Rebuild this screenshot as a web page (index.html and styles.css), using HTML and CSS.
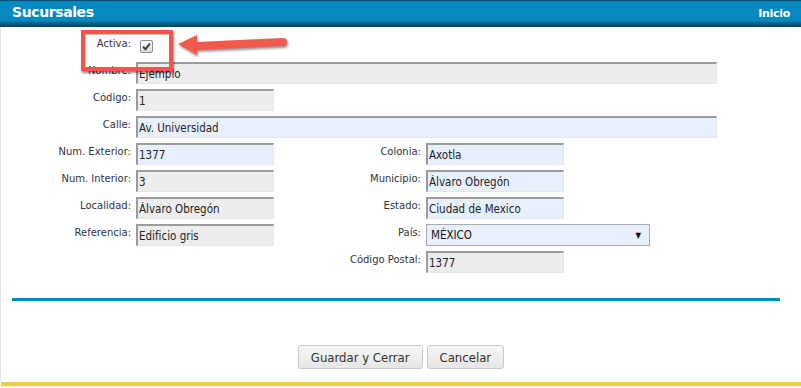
FILE: index.html
```html
<!DOCTYPE html>
<html lang="es">
<head>
  <meta charset="UTF-8">
  <meta name="viewport" content="width=device-width, initial-scale=1.0">
  <link rel="stylesheet" href="styles.css">
</head>
<body>

<div class="header">
  <span class="header-title">Sucursales</span>
  <a class="header-link" href="#">Inicio</a>
</div>

<div class="content">
  <form class="form-grid">
    <label class="lbl">Activa:</label>
    <span class="check"><svg width="9" height="9" viewBox="0 0 9 9"><path d="M1 4.8 L3.5 7.2 L8 1.5" fill="none" stroke="#3c3c3c" stroke-width="2"/></svg></span>

    <label class="lbl">Nombre:</label>
    <input class="field wide gray" value="Ejemplo" readonly>

    <label class="lbl">Código:</label>
    <input class="field gray" value="1" readonly>

    <label class="lbl">Calle:</label>
    <input class="field wide blue" value="Av. Universidad">

    <label class="lbl">Num. Exterior:</label>
    <input class="field blue" value="1377">
    <label class="lbl right">Colonia:</label>
    <input class="field blue" value="Axotla">

    <label class="lbl">Num. Interior:</label>
    <input class="field gray" value="3">
    <label class="lbl right">Municipio:</label>
    <input class="field blue" value="Álvaro Obregón">

    <label class="lbl">Localidad:</label>
    <input class="field gray" value="Álvaro Obregón">
    <label class="lbl right">Estado:</label>
    <input class="field blue" value="Ciudad de Mexico">

    <label class="lbl">Referencia:</label>
    <input class="field gray" value="Edificio gris">
    <label class="lbl right">País:</label>
    <div class="select">
      <span>MÉXICO</span>
      <span class="select-arrow">▼</span>
    </div>

    <label class="lbl right">Código Postal:</label>
    <input class="field gray" value="1377" readonly>
  </form>

  <div class="divider"></div>

  <div class="actions">
    <button type="button" class="btn">Guardar y Cerrar</button>
    <button type="button" class="btn">Cancelar</button>
  </div>
</div>

<div class="footer-bar"></div>

<!-- annotation -->
<div class="callout-box"></div>
<svg class="callout-arrow" width="130" height="40" viewBox="170 26 130 40">
  <line x1="198" y1="46" x2="283" y2="42" stroke="#f35a4e" stroke-width="8" stroke-linecap="round"/>
  <polygon points="178,44 197,35 197,55" fill="#f35a4e"/>
</svg>

</body>
</html>
```

FILE: styles.css
```css
body {
  margin: 0;
  font-family: 'DejaVu Sans', Verdana, sans-serif;
  background-color: #fff;
  position: relative;
  height: 388px;
  overflow: hidden;
}

.header {
  height: 27px;
  display: flex;
  justify-content: space-between;
  align-items: flex-start;
  box-sizing: border-box;
  padding: 4px 11px 0 12px;
  background: linear-gradient(to bottom, #0e4c6b 0, #0e4c6b 1px, #0788be 1px, #0788be 21px, #0672a2 22px, #0b5a80 24px, #103f58 27px);
}

.header-title {
  color: #fff;
  font-weight: bold;
  font-size: 14px;
  letter-spacing: -0.4px;
}

.header-link {
  color: #fff;
  font-weight: bold;
  font-size: 11px;
  text-decoration: none;
  padding-top: 3px;
  letter-spacing: -0.3px;
}

.content {
  border-left: 1px solid #e3e3e3;
  height: 355px;
  padding-top: 8px;
  box-sizing: border-box;
}

/* form layout */
.form-grid {
  display: grid;
  grid-template-columns: 130px 138px 142px 291px;
  grid-auto-rows: 22px;
  column-gap: 5px;
  row-gap: 5px;
  margin: 0;
}

.lbl {
  grid-column: 1;
  text-align: right;
  font-size: 10px;
  line-height: 12px;
  padding-top: 3px;
  color: #2e3440;
}

.lbl.right {
  grid-column: 3;
}

.check {
  width: 11px;
  height: 11px;
  margin: 5px 0 0 4px;
  border: 1px solid #8f8f8f;
  border-radius: 2px;
  background: linear-gradient(to bottom, #fcfcfc, #dcdcdc);
  display: flex;
  align-items: center;
  justify-content: center;
}

.field {
  width: 138px;
  height: 22px;
  box-sizing: border-box;
  margin: 0;
  padding: 0 0 0 1px;
  border-top: 2px solid #9b9b9b;
  border-left: 2px solid #9b9b9b;
  border-right: 1px solid #e6e6e6;
  border-bottom: 1px solid #e6e6e6;
  font-family: 'DejaVu Sans Condensed', 'DejaVu Sans', sans-serif;
  font-stretch: condensed;
  font-size: 11.5px;
  color: #222;
  outline: none;
}

.field.wide {
  grid-column: 2 / 5;
  width: 581px;
}

.gray {
  background-color: #ededed;
}

.blue {
  background-color: #e8f0fe;
}

.select {
  grid-column: 4;
  width: 224px;
  height: 22px;
  box-sizing: border-box;
  border: 1px solid #a9a9a9;
  background-color: #e8f0fe;
  display: flex;
  justify-content: space-between;
  align-items: center;
  padding: 0 8px 0 4px;
  font-family: 'DejaVu Sans Condensed', 'DejaVu Sans', sans-serif;
  font-stretch: condensed;
  font-size: 11.5px;
  color: #111;
}

.select-arrow {
  font-size: 8px;
}

.divider {
  height: 3px;
  background-color: #0689bf;
  margin: 25px 21px 0 11px;
}

.actions {
  display: flex;
  justify-content: center;
  gap: 4px;
  margin-top: 44px;
}

.btn {
  height: 24px;
  margin: 0;
  padding: 0 12px;
  border: 1px solid #c9c9c9;
  border-radius: 3px;
  background: linear-gradient(to bottom, #f7f7f7, #e6e6e6);
  font-family: 'DejaVu Sans Condensed', 'DejaVu Sans', sans-serif;
  font-stretch: condensed;
  font-size: 13px;
  color: #333;
}

.footer-bar {
  height: 4px;
  margin-left: 1px;
  background-color: #efcd42;
  border-bottom: 2px solid #f6f6f6;
}

/* red annotation on top of the form */
.callout-box {
  position: absolute;
  left: 81px;
  top: 30px;
  width: 92px;
  height: 41px;
  box-sizing: border-box;
  border: 4px solid #f0544b;
  box-shadow: 1px 2px 2px rgba(0, 0, 0, 0.45), inset 1px 1px 1px rgba(0, 0, 0, 0.25);
}

.callout-arrow {
  position: absolute;
  left: 170px;
  top: 26px;
  filter: drop-shadow(1px 2px 1px rgba(0, 0, 0, 0.4));
}
```
